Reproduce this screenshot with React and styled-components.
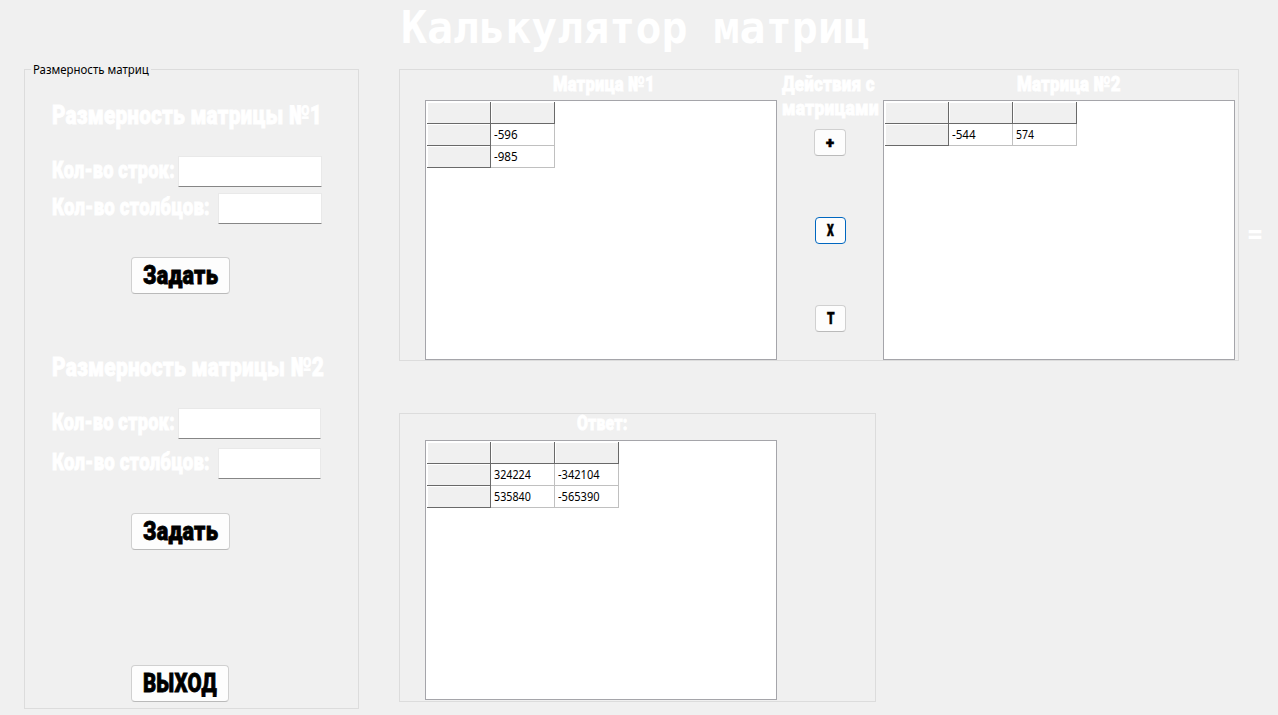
import React, { useLayoutEffect, useRef, useState } from "react";
import styled, { createGlobalStyle, css } from "styled-components";

const GlobalStyle = createGlobalStyle`
  * { box-sizing: border-box; }
  body { margin: 0; background: #f0f0f0; }
`;

const heavy = css`
  font-family: Roboto, "Liberation Sans", sans-serif;
  font-weight: 900;
  letter-spacing: 0.2px;
  -webkit-text-stroke: 0.8px currentColor;
`;

const ui = css`
  font-family: "Noto Sans", "Open Sans", sans-serif;
  font-size: 12px;
  line-height: 14px;
  color: #000;
`;

const FitBox = styled.span`
  display: block;
  flex: none;
  width: ${(p) => p.$width}px;
  white-space: nowrap;
`;

const FitInner = styled.span`
  display: inline-block;
  transform-origin: 0 50%;
`;

/* Condenses a line of text horizontally to the given width. */
function Fit({ width, children }) {
  const ref = useRef(null);
  const [scale, setScale] = useState(1);
  useLayoutEffect(() => {
    setScale(width / ref.current.offsetWidth);
  }, [width, children]);
  return (
    <FitBox $width={width}>
      <FitInner ref={ref} style={{ transform: `scaleX(${scale})` }}>{children}</FitInner>
    </FitBox>
  );
}

const Window = styled.div`
  width: 1278px;
  height: 715px;
  overflow: hidden;
  background: #f0f0f0;
  color: #fff;
`;

const Title = styled.h1`
  margin: 0;
  height: 69px;
  padding: 1px 0 0 401px;
  font: bold 44px/53px "DejaVu Sans Mono", monospace;
`;

const Body = styled.div`
  display: flex;
  padding-left: 24px;
`;

const Group = styled.section`
  width: ${(p) => p.$width}px;
  height: ${(p) => p.$height}px;
  border: 1px solid #dcdcdc;
  flex: none;
`;

const SizeGroup = styled(Group)`
  display: flex;
  flex-direction: column;
  padding-left: 27px;
`;

const Legend = styled.div`
  ${ui}
  margin: -7px 0 23px -21px;
  padding: 0 2px;
  width: 120px;
  height: 14px;
  background: #f0f0f0;
`;

const Heading = styled.h2`
  ${heavy}
  margin: ${(p) => p.$top}px 0 26px;
  font-size: 26px;
  line-height: 31px;
  height: 30px;
`;

const Field = styled.label`
  ${heavy}
  display: flex;
  align-items: center;
  justify-content: space-between;
  width: ${(p) => p.$width}px;
  height: 31px;
  margin-top: ${(p) => p.$top}px;
  font-size: 23px;
  line-height: 28px;
  > span { margin-bottom: 1px; }
`;

const Input = styled.input`
  width: ${(p) => p.$width}px;
  height: 31px;
  padding: 0 4px;
  border: 1px solid #e9e9e9;
  border-bottom-color: #868686;
  border-radius: 1px;
  background: #fff;
  outline: none;
`;

const Button = styled.button`
  ${heavy}
  display: flex;
  align-items: center;
  justify-content: center;
  flex: none;
  width: ${(p) => p.$width}px;
  height: 37px;
  margin: ${(p) => p.$top}px 0 0 79px;
  padding: 0;
  border: 1px solid #d0d0d0;
  border-bottom-color: #bababa;
  border-radius: 4px;
  background: #fdfdfd;
  color: #000;
  font-size: 26px;
  line-height: 35px;
`;

const ActionButton = styled(Button)`
  height: 27px;
  margin: 0;
  padding: 1px 0 0;
  font-size: ${(p) => p.$size || 16.5}px;
  line-height: 24px;
  -webkit-text-stroke-width: 0.6px;
  ${(p) => p.$focused && "border-color: #0067c0;"}
`;

const Right = styled.div`
  display: flex;
  flex-direction: column;
  gap: 52px;
  margin-left: 40px;
`;

const Operands = styled(Group)`
  display: flex;
  padding-left: 25px;
`;

const Answer = styled(Group)`
  padding-left: 25px;
`;

const MatrixColumn = styled.div`
  display: flex;
  flex-direction: column;
  width: 352px;
`;

const Caption = styled.h3`
  ${heavy}
  margin: 0;
  padding-left: ${(p) => p.$left}px;
  height: ${(p) => p.$height}px;
  font-size: 20.5px;
  line-height: ${(p) => p.$line}px;
`;

const GridFrame = styled.div`
  height: 260px;
  padding: 1px;
  border: 1px solid #a5a5aa;
  background: #fff;
`;

const Row = styled.div`
  display: flex;
`;

const HeaderCell = styled.div`
  width: 64px;
  height: 22px;
  background: #f0f0f0;
  box-shadow: inset -1px -1px #696969, inset 1px 1px #fff;
`;

const Cell = styled.div`
  ${ui}
  width: 64px;
  height: 22px;
  padding: 4px 0 0 3px;
  box-shadow: inset -1px -1px #c0c0c0;
`;

const Actions = styled.div`
  display: flex;
  flex-direction: column;
  width: 106px;
  padding: 3px 0 0 5px;
`;

const ActionsTitle = styled.h3`
  ${heavy}
  margin: 0 0 9px;
  font-size: 20.5px;
  line-height: 23.5px;
  height: 47px;
`;

const ActionList = styled.div`
  display: flex;
  flex-direction: column;
  align-items: flex-end;
  gap: 61px;
  width: 64px;
`;

const Equals = styled.div`
  ${heavy}
  -webkit-text-stroke-width: 0;
  padding: 150px 0 0 8px;
  font-size: 26px;
  line-height: 30px;
`;

const textWidth = (v) => [...v].reduce((w, c) => w + (c === "-" ? 4.9 : 6.1), 0);

function Matrix({ columns, rows }) {
  return (
    <GridFrame>
      <Row>
        {Array.from({ length: columns + 1 }, (_, i) => <HeaderCell key={i} />)}
      </Row>
      {rows.map((row, r) => (
        <Row key={r}>
          <HeaderCell />
          {row.map((v, c) => (
            <Cell key={c}><Fit width={textWidth(v)}>{v}</Fit></Cell>
          ))}
        </Row>
      ))}
    </GridFrame>
  );
}

export default function App() {
  return (
    <Window>
      <GlobalStyle />
      <Title><Fit width={469}>Калькулятор матриц</Fit></Title>
      <Body>
        <SizeGroup $width={335} $height={640}>
          <Legend><Fit width={116}>Размерность матриц</Fit></Legend>
          <Heading $top={0}><Fit width={270}>Размерность матрицы №1</Fit></Heading>
          <Field $width={270} $top={0}>
            <Fit width={123}>Кол-во строк:</Fit>
            <Input $width={144} />
          </Field>
          <Field $width={270} $top={6}>
            <Fit width={158}>Кол-во столбцов:</Fit>
            <Input $width={104} />
          </Field>
          <Button $width={99} $top={33}><Fit width={75}>Задать</Fit></Button>
          <Heading $top={58}><Fit width={272}>Размерность матрицы №2</Fit></Heading>
          <Field $width={269} $top={0}>
            <Fit width={123}>Кол-во строк:</Fit>
            <Input $width={143} />
          </Field>
          <Field $width={269} $top={9}>
            <Fit width={158}>Кол-во столбцов:</Fit>
            <Input $width={103} />
          </Field>
          <Button $width={99} $top={34}><Fit width={75}>Задать</Fit></Button>
          <Button $width={98} $top={115}><Fit width={74}>ВЫХОД</Fit></Button>
        </SizeGroup>
        <Right>
          <Operands $width={840} $height={292}>
            <MatrixColumn>
              <Caption $left={128} $height={30} $line={28}><Fit width={102}>Матрица №1</Fit></Caption>
              <Matrix columns={1} rows={[["-596"], ["-985"]]} />
            </MatrixColumn>
            <Actions>
              <ActionsTitle>
                <Fit width={93}>Действия с</Fit>
                <Fit width={97}>матрицами</Fit>
              </ActionsTitle>
              <ActionList>
                <ActionButton $width={32} $size={15}><Fit width={8}>+</Fit></ActionButton>
                <ActionButton $width={31} $focused><Fit width={7}>X</Fit></ActionButton>
                <ActionButton $width={31}><Fit width={8}>T</Fit></ActionButton>
              </ActionList>
            </Actions>
            <MatrixColumn>
              <Caption $left={134} $height={30} $line={28}><Fit width={104}>Матрица №2</Fit></Caption>
              <Matrix columns={2} rows={[["-544", "574"]]} />
            </MatrixColumn>
          </Operands>
          <Answer $width={477} $height={289}>
            <MatrixColumn>
              <Caption $left={152} $height={26} $line={19}><Fit width={51}>Ответ:</Fit></Caption>
              <Matrix columns={2} rows={[["324224", "-342104"], ["535840", "-565390"]]} />
            </MatrixColumn>
          </Answer>
        </Right>
        <Equals><Fit width={16}>=</Fit></Equals>
      </Body>
    </Window>
  );
}
